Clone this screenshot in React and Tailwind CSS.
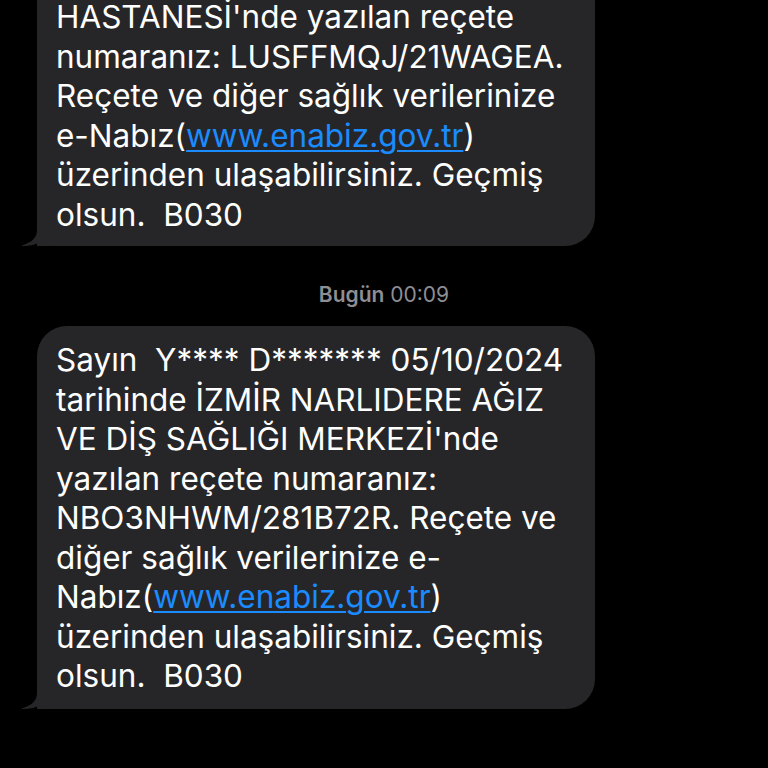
const font = { fontFamily: "Inter, 'Noto Sans', sans-serif" };

function Tail() {
  return (
    <svg
      className="absolute bottom-0 left-[-16px]"
      width="32"
      height="26"
      viewBox="0 0 32 26"
    >
      <path
        d="M16 0 L16 10 C16 17 12 22 1 25.5 C0 25.8 0 26 1.5 26 C9 26 15 24.5 20 21.5 C23 23.5 27 26 32 26 L32 0 Z"
        fill="#262628"
      />
    </svg>
  );
}

function Link() {
  return <span className="text-[#1b8cff] underline decoration-[1.5px] underline-offset-[3px]">www.enabiz.gov.tr</span>;
}

function Bubble({ children, cut }) {
  return (
    <div
      className={`relative w-[558px] bg-[#262628] pl-[19px] pr-4 text-[31.5px] leading-[39.5px] text-white whitespace-pre ${
        cut ? "-mt-[3px] pb-[12px] rounded-br-[30px]" : "pt-[14px] pb-[13px] rounded-tl-[30px] rounded-tr-[30px] rounded-br-[30px]"
      }`}
    >
      {children}
      <Tail />
    </div>
  );
}

export default function App() {
  return (
    <div className="min-h-screen w-full overflow-hidden bg-black pl-[37px]" style={font}>
      <Bubble cut>
        HASTANESİ'nde yazılan reçete
        <br />
        numaranız: LUSFFMQJ/21WAGEA.
        <br />
        Reçete ve diğer sağlık verilerinize
        <br />
        e-Nabız(<Link />)
        <br />
        üzerinden ulaşabilirsiniz. Geçmiş
        <br />
        olsun.  B030
      </Bubble>

      <div className="mt-[36px] mb-[18px] w-[694px] text-center text-[21px] leading-[26px] text-[#8e8e93]">
        <span className="font-semibold">Bugün</span> 00:09
      </div>

      <Bubble>
        Sayın  Y**** D******* 05/10/2024
        <br />
        tarihinde İZMİR NARLIDERE AĞIZ
        <br />
        VE DİŞ SAĞLIĞI MERKEZİ'nde
        <br />
        yazılan reçete numaranız:
        <br />
        NBO3NHWM/281B72R. Reçete ve
        <br />
        diğer sağlık verilerinize e-
        <br />
        Nabız(<Link />)
        <br />
        üzerinden ulaşabilirsiniz. Geçmiş
        <br />
        olsun.  B030
      </Bubble>
    </div>
  );
}
